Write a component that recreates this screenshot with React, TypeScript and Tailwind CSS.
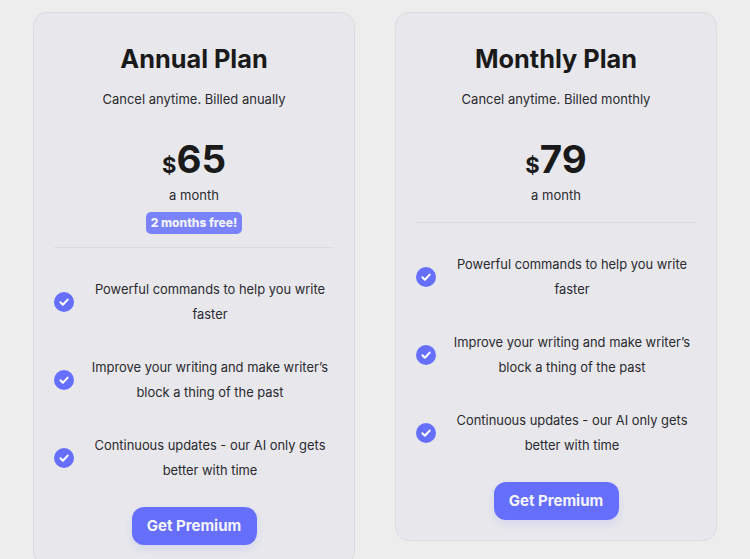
const features = [
  ['Powerful commands to help you write', 'faster'],
  ['Improve your writing and make writer’s', 'block a thing of the past'],
  ['Continuous updates - our AI only gets', 'better with time'],
];

function Check() {
  return (
    <svg className="w-5 h-5 shrink-0" viewBox="0 0 20 20">
      <circle cx="10" cy="10" r="10" fill="#656ffb" />
      <path d="M6.4 10.3l2.5 2.5L13.7 7.6" fill="none" stroke="#fff" strokeWidth="2" strokeLinecap="round" strokeLinejoin="round" />
    </svg>
  );
}

function Plan({ name, note, price, badge }: { name: string; note: string; price: string; badge?: string }) {
  return (
    <div className="w-[322px] shrink-0 rounded-[14px] border border-[#dcdce0] bg-[#e8e8ec] px-5 pt-[28px] pb-5 text-center">
      <h2 className="text-[25.3px] leading-[36px] font-bold text-[#1a1a1a]">{name}</h2>
      <p className="mt-[10px] text-[13px] leading-[24px] text-[#2a2a30]">{note}</p>
      <div className="mt-[30px] flex items-baseline justify-center font-bold text-[#1a1a1a]">
        <span className="text-[22px] leading-[36px]">$</span>
        <span className="text-[38.5px] leading-[36px]">{price}</span>
      </div>
      <p className="text-[13px] leading-[24px] text-[#2a2a30]">a month</p>
      {badge && (
        <div className="mt-[5px] flex justify-center">
          <span className="rounded-[5px] bg-[#7a83fb] px-[4.5px] text-[12px] leading-[22px] font-extrabold text-[#f2f2fa]">{badge}</span>
        </div>
      )}
      <div className={`border-t border-[#dcdce0] ${badge ? 'mt-[13px]' : 'mt-[15px]'}`} />
      <ul className="mt-[29px] flex flex-col gap-[28px]">
        {features.map((lines) => (
          <li key={lines[0]} className="flex items-center gap-[12px]">
            <Check />
            <span className="flex-1 text-[12.9px] leading-[25px] text-[#2a2a30]">
              {lines[0]}
              <br />
              {lines[1]}
            </span>
          </li>
        ))}
      </ul>
      <button className="mt-[24px] h-[38px] w-[125px] rounded-[12px] bg-[#656ffb] text-[15px] font-bold text-[#f4f4fc] shadow-[0_4px_10px_rgba(101,111,251,0.15)]">
        Get Premium
      </button>
    </div>
  );
}

export default function App() {
  return (
    <div className="h-[559px] overflow-hidden bg-[#ededed] font-['Inter','Liberation_Sans',sans-serif]">
      <div className="flex items-start gap-10 pl-[33px] pt-3">
        <Plan name="Annual Plan" note="Cancel anytime. Billed anually" price="65" badge="2 months free!" />
        <Plan name="Monthly Plan" note="Cancel anytime. Billed monthly" price="79" />
      </div>
    </div>
  );
}
